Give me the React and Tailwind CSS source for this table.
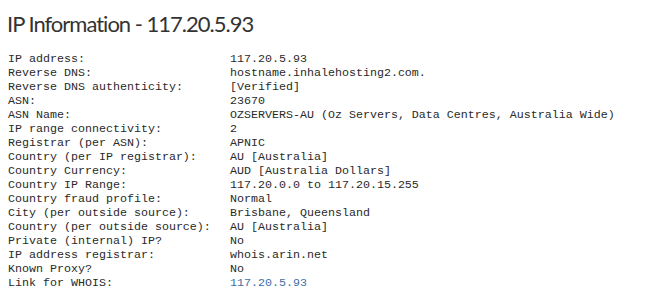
import React from "react";

const rows = [
    ["IP address:", "117.20.5.93"],
    ["Reverse DNS:", "hostname.inhalehosting2.com."],
    ["Reverse DNS authenticity:", "[Verified]"],
    ["ASN:", "23670"],
    ["ASN Name:", "OZSERVERS-AU (Oz Servers, Data Centres, Australia Wide)"],
    ["IP range connectivity:", "2"],
    ["Registrar (per ASN):", "APNIC"],
    ["Country (per IP registrar):", "AU [Australia]"],
    ["Country Currency:", "AUD [Australia Dollars]"],
    ["Country IP Range:", "117.20.0.0 to 117.20.15.255"],
    ["Country fraud profile:", "Normal"],
    ["City (per outside source):", "Brisbane, Queensland"],
    ["Country (per outside source):", "AU [Australia]"],
    ["Private (internal) IP?", "No"],
    ["IP address registrar:", "whois.arin.net"],
    ["Known Proxy?", "No"],
];

export default function App() {
    return (
        <div className="w-[645px] h-[300px] bg-white overflow-hidden">
            {/* Titre */}
            <h1 className="pl-[7px] pt-[10px] text-[22px] leading-[28px] tracking-[-1px] text-[#333] font-['Lato',sans-serif]">
                IP Information - 117.20.5.93
            </h1>

            {/* Tableau */}
            <div className="mt-[14px] pl-[8px] grid grid-cols-[222px_1fr] text-[11.67px] leading-[14px] text-[#2a2a2a] font-['Liberation_Mono',monospace] whitespace-pre">
                {rows.map(([label, value]) => (
                    <React.Fragment key={label}>
                        <div>{label}</div>
                        <div>{value}</div>
                    </React.Fragment>
                ))}
                <div>Link for WHOIS:</div>
                <a href="#" className="text-[#3d6fa8]">117.20.5.93</a>
            </div>
        </div>
    );
}
